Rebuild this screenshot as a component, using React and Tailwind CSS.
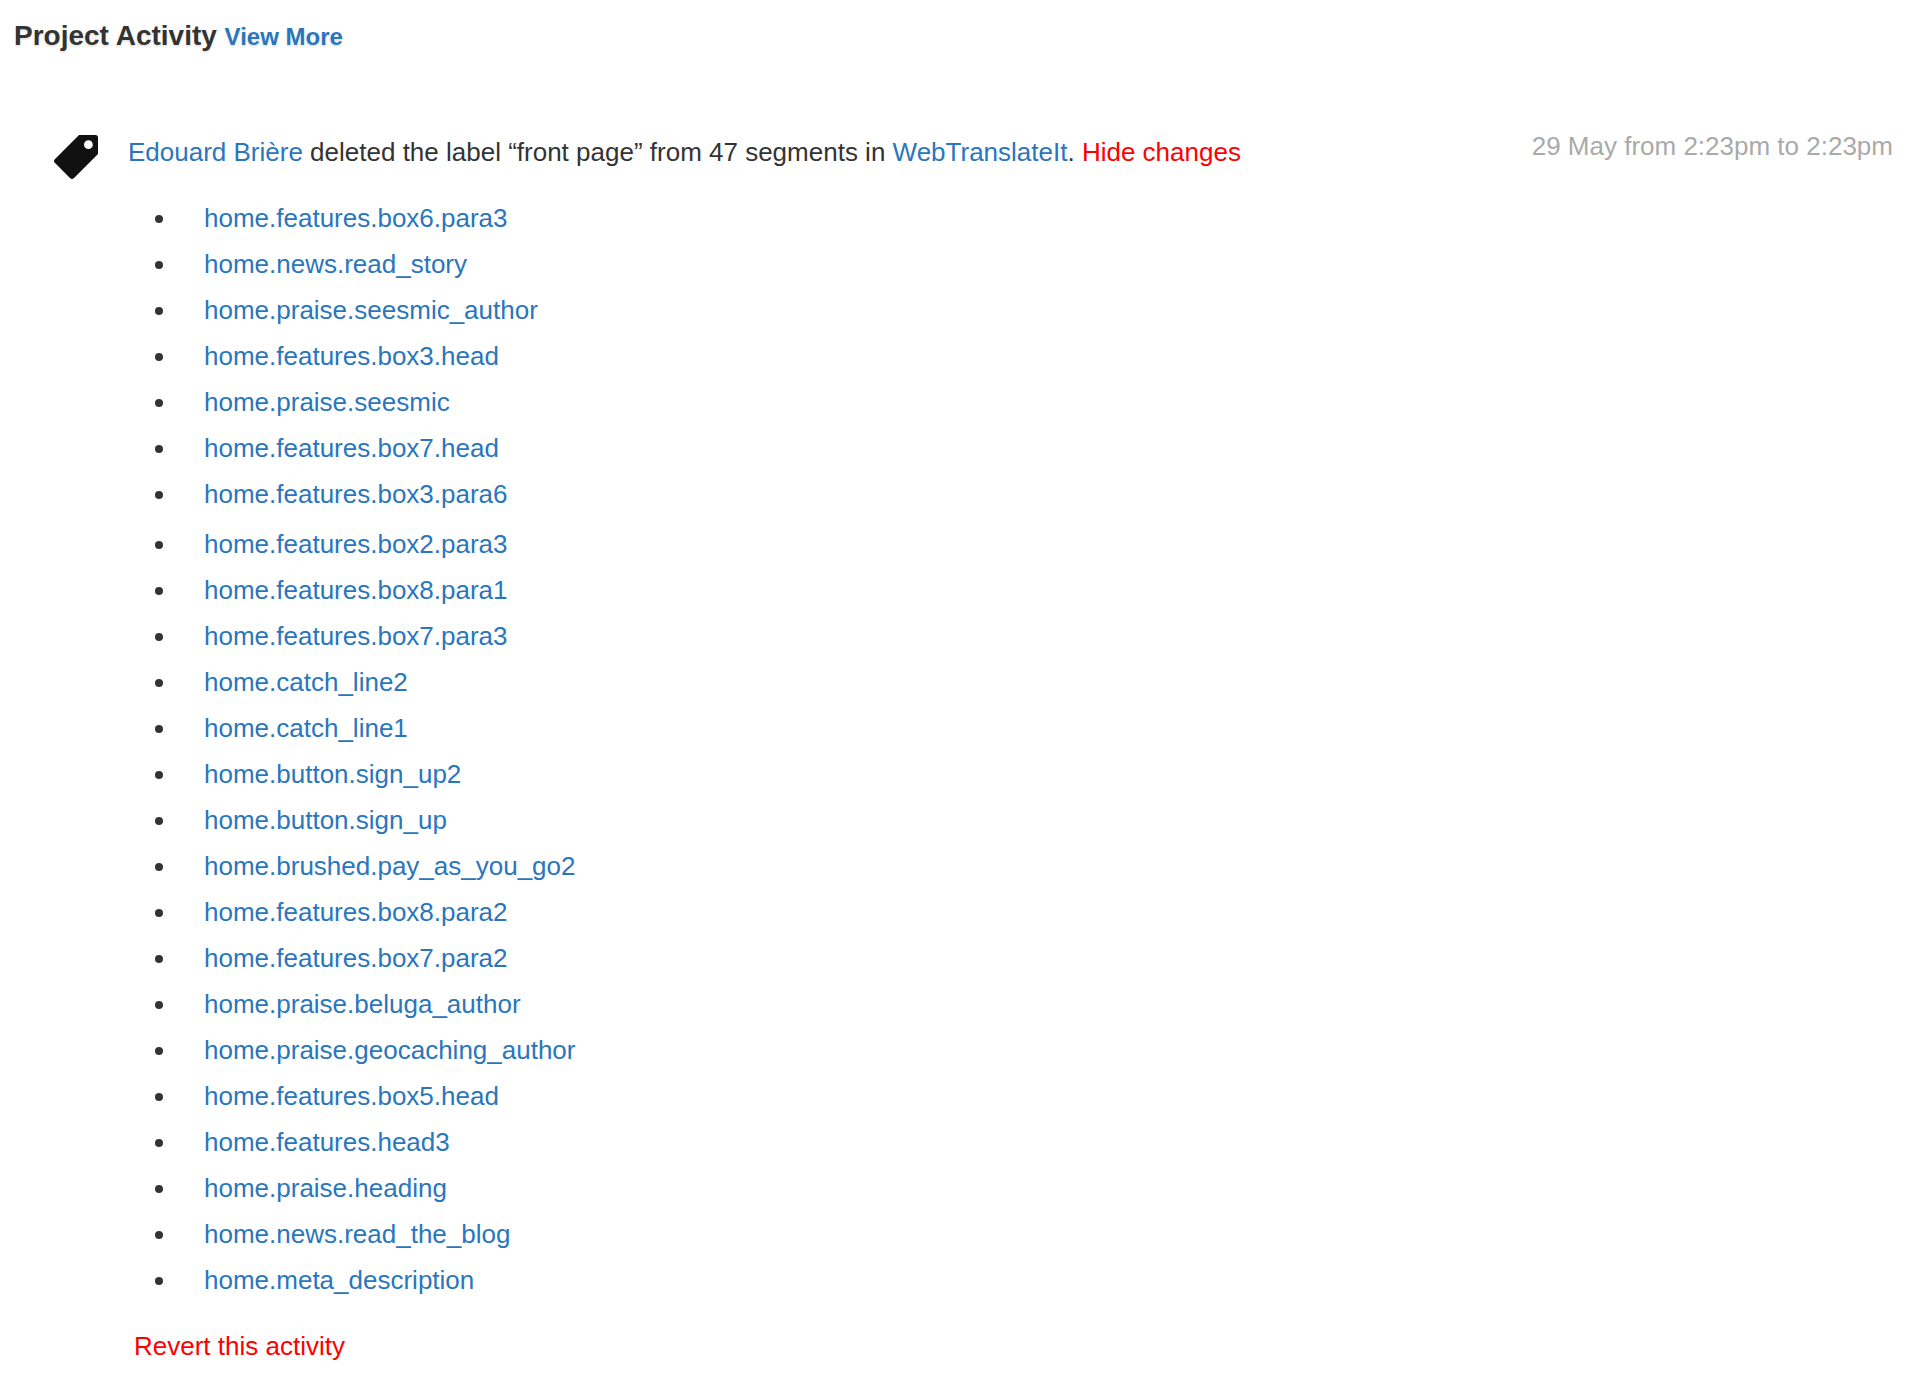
const segmentGroups = [
  [
    'home.features.box6.para3',
    'home.news.read_story',
    'home.praise.seesmic_author',
    'home.features.box3.head',
    'home.praise.seesmic',
    'home.features.box7.head',
    'home.features.box3.para6',
  ],
  [
    'home.features.box2.para3',
    'home.features.box8.para1',
    'home.features.box7.para3',
    'home.catch_line2',
    'home.catch_line1',
    'home.button.sign_up2',
    'home.button.sign_up',
    'home.brushed.pay_as_you_go2',
    'home.features.box8.para2',
    'home.features.box7.para2',
    'home.praise.beluga_author',
    'home.praise.geocaching_author',
    'home.features.box5.head',
    'home.features.head3',
    'home.praise.heading',
    'home.news.read_the_blog',
    'home.meta_description',
  ],
];

function TagIcon() {
  return (
    <svg className="w-11 h-11 mt-3 shrink-0" viewBox="0 0 44 44" aria-hidden="true">
      <path
        fill="#111"
        fillRule="evenodd"
        d="M25 0H41.5Q44 0 44 2.5V19L19.8 43.2Q18 44.8 16.2 43.2L.8 27.8Q-.8 26 .8 24.2ZM34.4 5.3a4.4 4.4 0 1 0 0 8.8a4.4 4.4 0 1 0 0-8.8Z"
      />
    </svg>
  );
}

function SegmentList({ segments }) {
  return (
    <ul>
      {segments.map((name) => (
        <li key={name} className="flex items-center">
          <span className="w-2 h-2 mt-0.5 ml-[27px] mr-[41px] rounded-full bg-[#333]" />
          <a href="#segment" className="text-[#2a76bd]">{name}</a>
        </li>
      ))}
    </ul>
  );
}

export default function App() {
  return (
    <main className="min-h-screen bg-white pt-4 pb-3 font-['Helvetica_Neue','Liberation_Sans',Arial,sans-serif] text-[26px] leading-[46px] text-[#333]">
      <h1 className="pl-3.5 text-[28px] leading-10 font-bold text-shadow-[0_2px_2px_rgb(0_0_0/0.1)]">
        Project Activity{' '}
        <a href="#activity" className="text-2xl leading-10 text-[#2a76bd]">View More</a>
      </h1>

      <article className="flex items-start mt-[66px] pl-[54px] pr-6">
        <TagIcon />
        <div className="grow ml-[30px] pt-1.5">
          <p>
            <a href="#user" className="text-[#2a76bd]">Edouard Brière</a> deleted the label “front page” from 47 segments in{' '}
            <a href="#project" className="text-[#2a76bd]">WebTranslateIt</a>.{' '}
            <button type="button" className="text-[#f00] cursor-pointer">Hide changes</button>
          </p>
          <div className="flex flex-col gap-1 mt-5">
            {segmentGroups.map((segments) => (
              <SegmentList key={segments[0]} segments={segments} />
            ))}
          </div>
          <button type="button" className="mt-5 ml-1.5 text-[#f00] cursor-pointer">
            Revert this activity
          </button>
        </div>
        <time className="shrink-0 text-[#aaa]">29 May from 2:23pm to 2:23pm</time>
      </article>
    </main>
  );
}
